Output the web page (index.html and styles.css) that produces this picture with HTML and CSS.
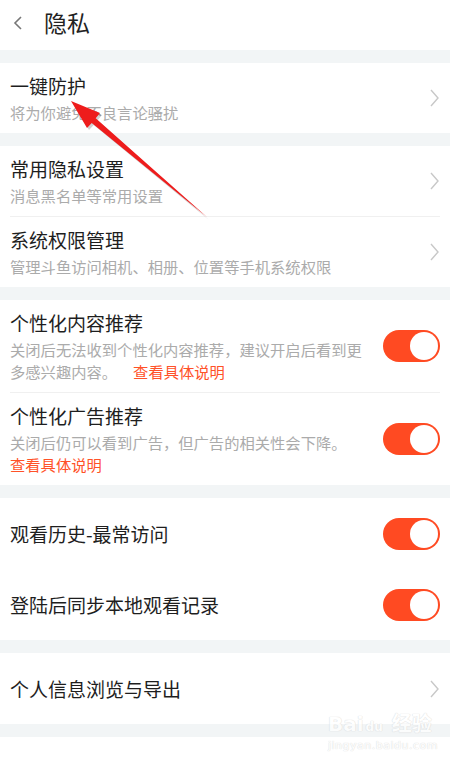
FILE: index.html
```html
<html>
<head>
<meta name="viewport" content="width=device-width, initial-scale=1">
<title>隐私</title>
<link rel="stylesheet" href="styles.css">
</head>
<body>
<div class='header'>
  <svg class='back' width='12' height='16' viewBox='0 0 12 16'><path d='M9 2 L3 8 L9 14' fill='none' stroke='#777' stroke-width='1.6'/></svg>
  <span class='title'>隐私</span>
</div>
<div class='gap'></div>
<div class='section'>
  <div class='row'>
    <div class='text'>
      <div class='name'>一键防护</div>
      <div class='desc'>将为你避免不良言论骚扰</div>
    </div>
    <svg class='chevron' width='11' height='18' viewBox='0 0 11 18'><path d='M2 1 L9 9 L2 17' fill='none' stroke='#c8c8c8' stroke-width='1.4'/></svg>
  </div>
</div>
<div class='gap'></div>
<div class='section'>
  <div class='row line'>
    <div class='text'>
      <div class='name'>常用隐私设置</div>
      <div class='desc'>消息黑名单等常用设置</div>
    </div>
    <svg class='chevron' width='11' height='18' viewBox='0 0 11 18'><path d='M2 1 L9 9 L2 17' fill='none' stroke='#c8c8c8' stroke-width='1.4'/></svg>
  </div>
  <div class='row line'>
    <div class='text'>
      <div class='name'>系统权限管理</div>
      <div class='desc'>管理斗鱼访问相机、相册、位置等手机系统权限</div>
    </div>
    <svg class='chevron' width='11' height='18' viewBox='0 0 11 18'><path d='M2 1 L9 9 L2 17' fill='none' stroke='#c8c8c8' stroke-width='1.4'/></svg>
  </div>
</div>
<div class='gap'></div>
<div class='section'>
  <div class='row line'>
    <div class='text'>
      <div class='name'>个性化内容推荐</div>
      <div class='desc'>关闭后无法收到个性化内容推荐，建议开启后看到更</div>
      <div class='desc split'><span>多感兴趣内容。</span><span class='more'>查看具体说明</span></div>
    </div>
    <div class='toggle'><div class='knob'></div></div>
  </div>
  <div class='row line'>
    <div class='text'>
      <div class='name'>个性化广告推荐</div>
      <div class='desc'>关闭后仍可以看到广告，但广告的相关性会下降。</div>
      <div class='desc more'>查看具体说明</div>
    </div>
    <div class='toggle'><div class='knob'></div></div>
  </div>
</div>
<div class='gap'></div>
<div class='section'>
  <div class='row single'>
    <div class='text'><div class='name'>观看历史-最常访问</div></div>
    <div class='toggle'><div class='knob'></div></div>
  </div>
  <div class='row single'>
    <div class='text'><div class='name'>登陆后同步本地观看记录</div></div>
    <div class='toggle'><div class='knob'></div></div>
  </div>
</div>
<div class='gap'></div>
<div class='section'>
  <div class='row single'>
    <div class='text'><div class='name'>个人信息浏览与导出</div></div>
    <svg class='chevron' width='11' height='18' viewBox='0 0 11 18'><path d='M2 1 L9 9 L2 17' fill='none' stroke='#c8c8c8' stroke-width='1.4'/></svg>
  </div>
</div>
<div class='gap'></div>

<svg class='arrow' width='450' height='760' viewBox='0 0 450 760'>
  <polygon points='73,103 102,115 97.7,120.3 209,220 93.7,124.9 89,130' fill='#000' opacity='0.18'/>
  <polygon points='71,101 100,113 95.7,118.3 207.5,217.5 91.7,122.9 87,128' fill='#ee1c1c'/>
</svg>
<div class='mark'>
  <div class='mark-top'>Bai<span class='paw'>du</span> 经验</div>
  <div class='mark-url'>jingyan.baidu.com</div>
</div>
</body>
</html>
```

FILE: styles.css
```css
html, body {
  margin: 0;
  padding: 0;
}

body {
  position: relative;
  width: 450px;
  height: 760px;
  overflow: hidden;
  background: #fff;
  font-family: "Noto Sans CJK SC", "Noto Sans", sans-serif;
  color: #222;
}

.header {
  height: 50px;
  box-sizing: border-box;
  padding: 0 0 6px 12px;
  display: flex;
  align-items: center;
}

.back {
  margin-top: 2px;
}

.title {
  margin-left: 20px;
  font-size: 23px;
  line-height: 30px;
  color: #222;
}

.gap {
  height: 13px;
  background: #f2f5f6;
}

.section {
  background: #fff;
}

.row {
  display: flex;
  align-items: center;
  padding: 10px 10px;
}

.row.line + .row.line {
  border-top: 1px solid #f0f0f0;
  margin: 0 10px;
  padding: 10px 0;
}

.row.single {
  height: 71px;
  box-sizing: border-box;
  padding: 0 10px;
}

.text {
  flex: 1;
  min-width: 0;
  display: flex;
  flex-direction: column;
  gap: 2px;
}

.text .desc + .desc {
  margin-top: -2px;
}

.name {
  font-size: 19px;
  line-height: 26px;
  color: #1e1e1e;
}

.desc {
  font-size: 15.3px;
  line-height: 22px;
  color: #ababab;
  padding-right: 8px;
  white-space: nowrap;
}

.desc.split {
  display: flex;
  gap: 16px;
}

.more,
.desc.more {
  color: #ff5228;
}

.chevron {
  flex: none;
}

.toggle {
  flex: none;
  width: 57px;
  height: 32px;
  border-radius: 16px;
  background: #ff4a22;
  display: flex;
  align-items: center;
  justify-content: flex-end;
  padding-right: 2px;
  box-sizing: border-box;
}

.knob {
  width: 28px;
  height: 28px;
  border-radius: 50%;
  background: #fff;
}

.arrow {
  position: absolute;
  left: 0;
  top: 0;
  pointer-events: none;
}

.mark {
  position: absolute;
  left: 328px;
  top: 712px;
  color: #fff;
  text-shadow: 0 0 1px #d0d0d0, 0 0 1px #d0d0d0;
  font-family: "DejaVu Sans", "Noto Sans CJK SC", sans-serif;
  opacity: 0.7;
}

.mark-top {
  font-size: 20px;
  font-weight: bold;
  line-height: 24px;
}

.paw {
  font-size: 12px;
  margin: 0 2px;
}

.mark-url {
  font-size: 11px;
  line-height: 14px;
  letter-spacing: 0.5px;
}
```
